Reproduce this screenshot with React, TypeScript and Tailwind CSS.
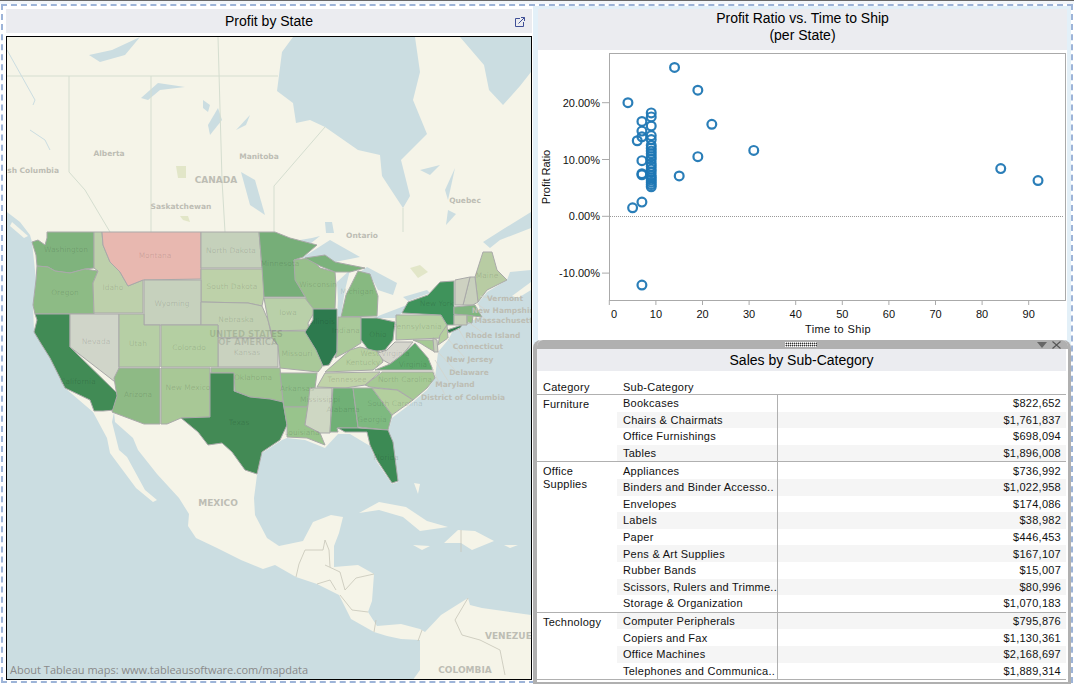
const states: [string, string][] = [
  ["47,232 94,232 94,268 85,269 70,273 55,271 48,267 37,266 36,255 32,242 38,240 45,245 47,238", "#7fb37d"],
  ["37,266 48,267 55,271 70,273 85,269 98,271 93,283 94,314 70,314 35,314 33,305 36,280", "#8dbb85"],
  ["35,314 70,314 70,347 118,394 115,410 103,411 94,411 90,400 65,388 50,358 40,342 34,332 37,320", "#418b55"],
  ["70,314 119,314 119,385 70,347", "#d0d5c9"],
  ["94,232 102,232 103,245 110,262 120,272 128,286 143,280 143,313 94,313 93,283 98,271 94,268", "#bdd0ab"],
  ["102,232 201,232 201,279 143,280 128,286 120,272 110,262 103,245", "#e8b8b0"],
  ["201,232 259,232 262,268 201,268", "#c5d1bb"],
  ["201,269 263,269 264,296 262,306 248,303 201,302", "#bdd1a9"],
  ["144,280 201,280 201,325 144,325", "#c6d1bd"],
  ["201,302 248,303 262,306 268,320 272,338 218,338 218,325 201,325", "#c1d0b2"],
  ["218,338 272,338 278,345 278,367 218,367", "#c9d2bf"],
  ["119,314 144,314 144,325 160,325 160,367 119,367", "#b6cfa5"],
  ["161,325 218,325 218,367 161,367", "#b4cfa2"],
  ["119,368 160,368 160,424 144,424 112,412 117,396 114,378", "#8eba85"],
  ["161,368 210,368 210,417 181,418 167,424 161,424", "#a8c896"],
  ["211,368 280,368 283,402 270,399 250,397 235,391 234,373 211,373", "#9dc48e"],
  ["210,373 234,373 234,391 250,397 270,399 283,402 287,425 280,440 262,452 257,474 245,470 232,452 222,443 208,445 198,432 181,418 210,417", "#438a55"],
  ["259,232 275,232 290,238 317,245 303,257 294,260 296,280 305,297 264,297 262,268", "#76ae78"],
  ["294,260 310,258 320,268 335,272 336,285 335,309 307,309 306,298 295,280", "#97c08b"],
  ["305,258 325,255 335,262 365,268 350,272 335,272 320,266", "#7bb27b"],
  ["341,317 346,295 358,271 370,274 378,296 377,316", "#87b981"],
  ["264,298 305,298 315,311 308,323 309,330 271,331 268,320", "#b9d0a9"],
  ["271,331 309,331 323,358 322,367 318,372 280,368 278,345 272,338", "#a9c999"],
  ["313,309 337,309 337,352 333,358 329,365 323,366 316,350 305,332 313,320", "#2d7a4e"],
  ["338,317 361,317 361,343 350,350 335,358 337,352", "#a9c999"],
  ["361,318 377,318 395,322 393,340 385,350 370,352 361,340", "#3e8f58"],
  ["325,372 333,365 350,350 360,347 380,352 383,362 373,370", "#b6d0a1"],
  ["378,353 387,350 395,342 413,342 402,355 390,364 383,360", "#d6d6cd"],
  ["375,370 390,364 402,355 415,343 428,358 433,370", "#5ea86b"],
  ["365,385 382,372 433,372 435,378 427,388 413,400 398,390 370,387", "#a6c995"],
  ["317,387 325,373 380,372 365,385 345,388", "#c0d3a9"],
  ["280,373 317,373 315,388 308,405 308,407 284,407 283,400", "#8ebe88"],
  ["284,407 308,407 305,425 320,433 325,445 307,438 287,437 287,425", "#98c48c"],
  ["310,388 332,388 330,433 320,433 305,425 308,405", "#ced7c3"],
  ["333,388 353,388 358,428 337,428 338,432 330,432", "#70b076"],
  ["353,388 372,388 392,415 388,430 358,427", "#7eb980"],
  ["372,388 397,390 413,400 392,415", "#b3cf9e"],
  ["338,428 358,428 388,430 393,442 398,481 392,483 377,460 370,445 367,432 345,432", "#3c8a54"],
  ["396,315 441,315 447,325 442,338 396,340", "#b6d0a3"],
  ["402,313 408,302 428,295 440,282 454,281 454,325 447,325 441,315", "#3f935b"],
  ["447,330 462,325 460,328 449,333", "#2f7d4d"],
  ["475,277 483,252 492,252 497,270 507,280 487,290 478,302", "#b8cca3"],
  ["463,305 470,277 475,277 478,302 473,305", "#c8d0bd"],
  ["455,280 470,277 463,305 455,305", "#cdd1c1"],
  ["454,307 475,305 482,317 473,316 454,314", "#80b57f"],
  ["454,315 467,315 467,325 454,325", "#c6d0b8"],
  ["467,315 473,316 472,323 467,323", "#9cc38c"],
  ["447,325 448,338 438,345 440,335", "#b5cf9f"],
  ["413,340 433,340 435,352 428,348 420,343", "#a6c995"],
  ["433,338 437,340 438,352 434,352", "#c8d0bd"],
];

const stateLabels: [string, number, number][] = [
  ["Washington", 66, 252], ["Oregon", 65, 295], ["California", 78, 384], ["Nevada", 96, 344], ["Idaho", 113, 290],
  ["Montana", 155, 258], ["Wyoming", 172, 306], ["Utah", 138, 346], ["Colorado", 189, 350], ["Arizona", 138, 397],
  ["New Mexico", 188, 390], ["North Dakota", 231, 253], ["South Dakota", 232, 289], ["Nebraska", 236, 322],
  ["Kansas", 247, 355], ["Oklahoma", 253, 380], ["Texas", 239, 425], ["Minnesota", 280, 266], ["Wisconsin", 318, 287],
  ["Michigan", 357, 294], ["Iowa", 288, 315], ["Illinois", 323, 324], ["Indiana", 346, 333], ["Ohio", 378, 337],
  ["New York", 437, 306], ["Pennsylvania", 417, 329], ["Missouri", 297, 356], ["West Virginia", 385, 356],
  ["Virginia", 413, 367], ["Kentucky", 363, 365], ["Tennessee", 347, 382], ["North Carolina", 405, 382],
  ["Arkansas", 297, 391], ["Mississippi", 320, 402], ["Alabama", 343, 412], ["South Carolina", 395, 406],
  ["Georgia", 372, 422], ["Louisiana", 302, 435], ["Florida", 386, 460], ["Maine", 487, 278],
];

const outerLabels: [string, number, number][] = [
  ["Vermont", 505, 301], ["New Hampshire", 505, 313], ["Massachusetts", 506, 323], ["Rhode Island", 493, 338],
  ["Connecticut", 478, 349], ["New Jersey", 470, 362], ["Delaware", 469, 375], ["Maryland", 455, 387],
  ["District of Columbia", 463, 400], ["Alberta", 109, 156], ["Manitoba", 259, 159], ["Saskatchewan", 181, 209],
  ["Quebec", 465, 203], ["Ontario", 362, 238],
];

const lakes: string[] = [
  "293,37 282,52 277,91 293,103 296,123 310,120 325,127 358,150 380,155 382,176 403,208 410,196 401,160 427,134 413,100 420,72 415,37",
  "460,37 484,65 489,90 503,105 520,86 531,72 531,37",
  "89,55 112,50 140,37 125,55 100,62",
  "241,172 255,180 265,215 250,205",
  "141,98 158,83 185,87 160,90 148,100",
  "208,125 218,108 222,120 210,135",
  "203,100 210,105 208,112 203,108",
  "236,130 250,115 246,125",
  "325,222 332,222 334,233 326,233",
  "302,258 330,240 360,257 335,262 325,255 305,258",
  "337,282 350,270 345,290 341,316 337,317 338,300",
  "367,267 397,283 393,295 378,290 370,275 360,272",
  "373,318 407,305 402,313 395,318",
  "403,297 427,290 430,293 408,301",
  "300,240 312,238 320,236 310,244",
  "483,242 505,228 531,212 531,228 500,240 490,248",
  "445,190 455,168 448,200",
  "420,170 440,165 430,175",
  "448,210 456,214 446,225",
];

const land = "7,37 531,37 531,270 510,272 507,280 487,292 478,303 482,317 473,320 455,327 448,340 438,352 435,378 427,390 413,402 392,418 388,432 393,445 398,482 392,484 377,462 370,446 350,434 338,434 325,448 305,440 287,438 282,440 262,453 257,475 254,498 255,515 267,538 279,546 303,541 313,522 331,515 343,517 339,533 334,546 334,567 358,565 374,574 372,601 368,612 377,626 401,624 420,629 425,632 441,615 468,598 470,605 482,608 531,615 531,684 410,684 420,670 420,640 401,639 387,636 374,632 351,619 339,595 317,584 296,577 275,565 263,569 241,560 217,548 196,538 188,526 189,514 179,498 157,474 138,450 133,438 115,422 114,412 93,412 65,388 50,358 34,331 33,305 36,280 32,242 30,235 20,222 7,212";

const islands: string[] = [
  "93,412 100,425 107,438 110,453 136,488 153,502 157,500 145,490 127,457 119,450 112,422 114,412",
  "359,513 379,502 406,507 427,521 448,527 420,531 403,517 379,510",
  "444,543 458,530 475,531 494,541 472,550 461,543",
  "413,545 430,546 422,550",
  "504,545 518,545 510,548",
  "512,296 531,282 531,290 518,298",
  "414,483 420,484 418,494",
  "12,222 28,236 24,238 10,226",
];

const pts: [number, number][] = [
  [4, 20], [14, 26.2], [19, 22.2], [22, 16.2], [31, 11.6], [19, 10.5], [15, 7.1], [84, 8.4], [92, 6.3], [5, 1.5], [7, 2.5], [7, -12.1],
  [7, 16.7], [7, 15], [7, 14], [6, 13.3], [7, 9.8], [7, 7.5], [7, 7.3],
  [9, 18.2], [9, 17.5], [9, 15.9], [9, 14.2], [9, 13.5], [9, 12.5], [9, 12], [9, 11.5], [9, 11], [9, 10.5], [9, 10], [9, 9.3], [9, 8.8],
  [9, 8.3], [9, 7.8], [9, 7.2], [9, 6.8], [9, 6.4], [9, 6], [9, 5.6], [9, 5.2],
];

const groups: { cat: string[]; rows: [string, string][] }[] = [
  { cat: ["Furniture"], rows: [["Bookcases", "$822,652"], ["Chairs & Chairmats", "$1,761,837"], ["Office Furnishings", "$698,094"], ["Tables", "$1,896,008"]] },
  {
    cat: ["Office", "Supplies"],
    rows: [["Appliances", "$736,992"], ["Binders and Binder Accesso..", "$1,022,958"], ["Envelopes", "$174,086"], ["Labels", "$38,982"], ["Paper", "$446,453"],
      ["Pens & Art Supplies", "$167,107"], ["Rubber Bands", "$15,007"], ["Scissors, Rulers and Trimme..", "$80,996"], ["Storage & Organization", "$1,070,183"]],
  },
  { cat: ["Technology"], rows: [["Computer Peripherals", "$795,876"], ["Copiers and Fax", "$1,130,361"], ["Office Machines", "$2,168,697"], ["Telephones and Communica..", "$1,889,314"]] },
];

function MapView() {
  const dv = "'DejaVu Sans', sans-serif";
  return (
    <svg viewBox="7 37 524 642" className="block w-full h-full" style={{ background: "#cbdde1" }}>
      <g className="blur-[0.4px]">
        <polygon points={land} fill="#f5f4e8" />
        {islands.map((p, i) => <polygon key={i} points={p} fill="#f5f4e8" />)}
        {lakes.map((p, i) => <polygon key={i} points={p} fill="#cbdde1" />)}
        <g fill="none" stroke="#d5ded0" strokeWidth="1">
          <path d="M7 76H278M69 76V172L85 190L110 232M151 76V232M218 37L222 180L225 232M274 232V186L325 127M403 208V232" />
          <path d="M33 105L35 100L7 50M30 130L45 140L50 150" stroke="#cbdde1" />
        </g>
        <g fill="none" stroke="#c7c5b8" strokeWidth="0.8">
          <path d="M296 577L299 564L305 550L323 550L325 540L329 550L330 567M317 584L330 580L336 590M325 565L340 572L345 590L356 578L374 574M340 595L352 610L368 612M374 632L376 620M418 641L422 630M468 598L455 620L462 635L480 640L500 650L505 675M463 520" />
          <path d="M461 530V552" />
        </g>
        <polygon points="180,216 188,216 190,222 183,220" fill="#e2e6c8" />
        <polygon points="176,166 186,166 186,178 178,178" fill="#e2e6c8" />
        <polygon points="410,268 420,265 428,272 418,278" fill="#e2e6c8" />
        <g stroke="#a9a9a9" strokeWidth="1" strokeLinejoin="round">
          {states.map(([p, f], i) => <polygon key={i} points={p} fill={f} />)}
        </g>
        <path d="M480 296L497 300M476 303L490 313M482 317L492 323M468 322L486 335M458 328L468 345M447 338L465 358M438 352L456 371M435 360L450 384M432 368L445 395" stroke="#d4d4cc" strokeWidth="0.8" fill="none" />
      </g>
      <g fontFamily={dv} fontSize="7.5" textAnchor="middle" fill="#000" fillOpacity="0.13">
        {stateLabels.map(([t, x, y]) => <text key={t} x={x} y={y}>{t}</text>)}
        <text x="246" y="337" fontWeight="bold" fontSize="8.5">UNITED STATES</text>
        <text x="248" y="345" fontWeight="bold" fontSize="8.5">OF AMERICA</text>
      </g>
      <g fontFamily={dv} fontSize="7.5" textAnchor="middle" fill="#bdbdb4" fontWeight="bold" stroke="none">
        {outerLabels.map(([t, x, y]) => <text key={t} x={x} y={y}>{t}</text>)}
        <text x="59" y="173" textAnchor="end">British Columbia</text>
        <text x="216" y="183" fontSize="9">CANADA</text>
        <text x="218" y="506" fontSize="9">MEXICO</text>
        <text x="465" y="673" fontSize="9">COLOMBIA</text>
        <text x="485" y="639" fontSize="9" textAnchor="start">VENEZUELA</text>
      </g>
      <text x="10" y="674" fontFamily="'Open Sans', sans-serif" fontSize="11" fill="#8a8a8a">About Tableau maps: www.tableausoftware.com/mapdata</text>
    </svg>
  );
}

function Scatter() {
  const sx = (v: number) => 611.3 + v * 4.66;
  const sy = (v: number) => 216.3 - v * 5.68;
  const xTicks = [0, 10, 20, 30, 40, 50, 60, 70, 80, 90];
  const yTicks = [20, 10, 0, -10];
  return (
    <svg viewBox="540 50 529 290" className="block w-[529px] h-[290px]" style={{ fontFamily: "'Liberation Sans', sans-serif" }}>
      <rect x="611.5" y="53.5" width="456" height="247" fill="#fff" stroke="#aaaaaa" />
      <line x1="612" x2="1066" y1="216.5" y2="216.5" stroke="#999" strokeDasharray="1 1" />
      {yTicks.map((t) => (
        <g key={t}>
          <line x1="604" x2="611" y1={sy(t)} y2={sy(t)} stroke="#aaa" />
          <text x="602" y={sy(t) + 4} textAnchor="end" fontSize="11" fill="#111">{t.toFixed(2)}%</text>
        </g>
      ))}
      {xTicks.map((t) => (
        <g key={t}>
          <line x1={sx(t)} x2={sx(t)} y1="300" y2="305" stroke="#aaa" />
          <text x={t === 0 ? 616 : sx(t)} y="318" textAnchor="middle" fontSize="11" fill="#111">{t}</text>
        </g>
      ))}
      <text x="840" y="333" textAnchor="middle" fontSize="11" letterSpacing="0.4" fill="#111">Time to Ship</text>
      <text transform="translate(552 177) rotate(-90)" textAnchor="middle" fontSize="11" fill="#111">Profit Ratio</text>
      {pts.map(([x, y], i) => (
        <circle key={i} cx={sx(x)} cy={sy(y)} r="4.4" fill="none" stroke="#1f77b4" strokeWidth="2.2" strokeOpacity="0.95" />
      ))}
    </svg>
  );
}

function SalesTable() {
  let idx = -1;
  return (
    <div className="text-[11px] tracking-[0.25px] text-[#111] leading-[14px]">
      <div className="flex h-[14px] mt-[9px] border-b-0">
        <div className="w-[80px] pl-[6px]">Category</div>
        <div className="pl-[6px]">Sub-Category</div>
      </div>
      {groups.map((g) => (
        <div key={g.cat[0]} className="flex border-t border-[#b0b0b0]">
          <div className="w-[80px] shrink-0 pl-[6px] pt-[2px]">
            {g.cat.map((c) => <div key={c} className="h-[13px]">{c}</div>)}
          </div>
          <div className="flex-1">
            {g.rows.map(([s, v]) => {
              idx += 1;
              const shaded = idx % 2 === 1;
              return (
                <div key={s} className={shaded ? "flex h-[16.6px] items-center bg-[#f5f5f5]" : "flex h-[16.6px] items-center"}>
                  <div className="w-[161px] h-full shrink-0 pl-[6px] border-r border-[#b0b0b0] whitespace-nowrap overflow-hidden flex items-center">{s}</div>
                  <div className="flex-1 text-right pr-[5px]">{v}</div>
                </div>
              );
            })}
          </div>
        </div>
      ))}
      <div className="border-t border-[#b0b0b0]" />
    </div>
  );
}

export default function App() {
  return (
    <div className="w-[1074px] h-[684px] bg-white overflow-hidden flex flex-col" style={{ fontFamily: "'Liberation Sans', sans-serif" }}>
      <div className="h-[1px] bg-[#666] shrink-0" />
      <div className="h-[3px] shrink-0 bg-[#f2f6fa]" />
      <div className="ml-[1px] w-[1072px] h-[679px] border-2 border-dashed border-[#9db4d8] flex bg-white">
        <div className="ml-[3px] w-[526px] shrink-0">
          <div className="relative mt-[3px] h-[24px] bg-[#ebecf0] flex items-center justify-center text-[14px] text-black">
            Profit by State
            <svg viewBox="0 0 12 12" className="absolute right-[6px] top-[7px] w-[12px] h-[12px]" fill="none" stroke="#3f4f96" strokeWidth="1">
              <path d="M6 2.5H1.5V10.5H9.5V6" />
              <path d="M4.5 7.5L10.5 1.5M7 1.5H10.5V5" />
            </svg>
          </div>
          <div className="mt-[3px] h-[644px] border-[1.5px] border-black overflow-hidden">
            <MapView />
          </div>
        </div>
        <div className="ml-[1px] w-[538px] shrink-0 flex flex-col bg-[#e3f0f8]">
          <div className="ml-[5px] w-[529px] mt-[3px] h-[41px] bg-[#ebecf0] text-center text-[14px] leading-[17px] pt-[1px] text-black shrink-0">
            <div>Profit Ratio vs. Time to Ship</div>
            <div>(per State)</div>
          </div>
          <div className="ml-[5px] w-[529px] h-[290px] bg-white shrink-0">
            <Scatter />
          </div>
          <div className="h-[344px] shrink-0 rounded-t-[8px] border-[#b0b0b0] border-l-[4px] border-r-[3px] border-b-[2px] bg-white">
            <div className="relative h-[9px] bg-[#b0b0b0] rounded-t-[6px]">
              <svg className="absolute left-[248px] top-[2px] w-[32px] h-[5px]" viewBox="0 0 32 5">
                <defs>
                  <pattern id="grip" width="2" height="2" patternUnits="userSpaceOnUse">
                    <rect width="1" height="1" fill="#fff" />
                    <rect x="1" y="1" width="1" height="1" fill="#333" />
                  </pattern>
                </defs>
                <rect width="32" height="5" fill="url(#grip)" />
              </svg>
              <svg className="absolute right-[21px] top-[2px] w-[10px] h-[6px]" viewBox="0 0 10 6"><path d="M0 0H10L5 6Z" fill="#666" /></svg>
              <svg className="absolute right-[7px] top-[1px] w-[9px] h-[8px]" viewBox="0 0 9 8" fill="none" stroke="#555" strokeWidth="1.1"><path d="M0.5 0.5L8.5 7.5M8.5 0.5L0.5 7.5" /></svg>
            </div>
            <div className="w-[529px]">
              <div className="h-[22px] bg-[#ebecf0] flex items-center justify-center text-[14px] text-black">Sales by Sub-Category</div>
              <SalesTable />
            </div>
          </div>
        </div>
      </div>
    </div>
  );
}
